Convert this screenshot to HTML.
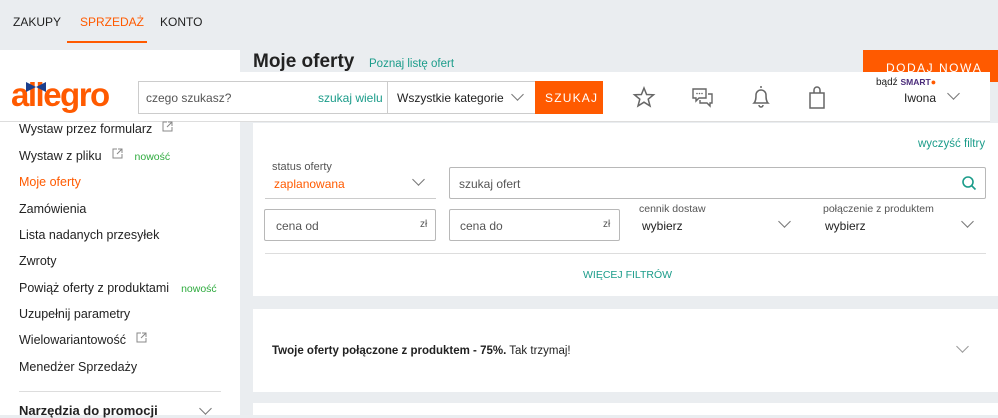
<!DOCTYPE html>
<html><head><meta charset="utf-8"><style>
*{margin:0;padding:0;box-sizing:border-box}
body{width:998px;height:415px;overflow:hidden;background:#eaedf0;font-family:"Liberation Sans",sans-serif;color:#222;position:relative}
.a{position:absolute;white-space:nowrap}
.g{color:#1b9c8a}
.box{position:absolute;border:1px solid #b8b8b8;border-radius:2px;background:#fff}
.chev{position:absolute;width:9px;height:9px;border-right:1.5px solid #777;border-bottom:1.5px solid #777;transform:rotate(45deg)}
.lm{position:absolute;left:19px;font-size:12.5px;color:#222;white-space:nowrap}
.ext{display:inline-block;vertical-align:middle;margin-left:10px;position:relative;top:-3px}
.new{font-size:10.5px;color:#2eab3e;margin-left:12px}
</style></head><body>
<div class="a" style="left:13px;top:15px;font-size:12px">ZAKUPY</div>
<div class="a" style="left:80px;top:15px;font-size:12px;color:#ff5a00">SPRZEDAŻ</div>
<div class="a" style="left:160px;top:15px;font-size:12px">KONTO</div>
<div class="a" style="left:67px;top:41px;width:80px;height:2px;background:#ff5a00"></div>
<div class="a" style="left:0;top:50px;width:240px;height:365px;background:#fff"></div>
<div class="a" style="left:253px;top:51px;font-size:19px;font-weight:bold;color:#222">Moje oferty</div>
<div class="a g" style="left:369px;top:58px;font-size:11.5px">Poznaj listę ofert</div>
<div class="a" style="left:863px;top:50px;width:135px;height:32px;background:#ff5a00;color:#fff;font-size:12px;letter-spacing:1.5px;padding:11px 0 0 23px">DODAJ NOWĄ</div>
<div class="a" style="left:0;top:72px;width:990px;height:50px;background:#fff;border-bottom:1px solid #ddd"></div>
<div class="a" style="left:11px;top:76px;font-size:33px;font-weight:bold;color:#ff5a00;letter-spacing:-1.5px">allegro</div>
<div class="a" style="left:26px;top:82px;width:20px;height:10px;background:#1c3f8c;clip-path:polygon(0 0,50% 50%,100% 0,100% 100%,50% 50%,0 100%)"></div>
<div class="box" style="left:138px;top:81px;width:250px;height:33px;border-color:#ccc;border-radius:0"></div>
<div class="a" style="left:146px;top:91px;font-size:12px;color:#555">czego szukasz?</div>
<div class="a g" style="left:318px;top:91px;font-size:12px">szukaj wielu</div>
<div class="box" style="left:387px;top:81px;width:149px;height:33px;border-color:#ccc;border-radius:0"></div>
<div class="a" style="left:397px;top:91px;font-size:12px">Wszystkie kategorie</div>
<div class="chev" style="left:513px;top:90px"></div>
<div class="a" style="left:535px;top:81px;width:68px;height:33px;background:#ff5a00;color:#fff;font-size:12px;letter-spacing:1.2px;padding:10px 0 0 10px">SZUKAJ</div>
<svg class="a" style="left:632px;top:86px" width="24" height="22" viewBox="0 0 24 22"><polygon points="12,2 14.6,8.5 21.5,8.8 16.2,13.2 18,20 12,16.2 6,20 7.8,13.2 2.5,8.8 9.4,8.5" fill="none" stroke="#666" stroke-width="1.5"/></svg>
<svg class="a" style="left:691px;top:86px" width="24" height="22" viewBox="0 0 24 22"><path d="M2 3h13v9H8l-3 3v-3H2z M17 8h4v9h-2v3l-3-3H9v-3" fill="none" stroke="#666" stroke-width="1.4"/><circle cx="6" cy="7.5" r=".8" fill="#666"/><circle cx="8.5" cy="7.5" r=".8" fill="#666"/><circle cx="11" cy="7.5" r=".8" fill="#666"/></svg>
<svg class="a" style="left:750px;top:84px" width="22" height="26" viewBox="0 0 22 26"><path d="M11 2v2 M4 19c2-2 2-5 2-8a5 5 0 0110 0c0 3 0 6 2 8z M9 21a2 2 0 004 0" fill="none" stroke="#666" stroke-width="1.5"/></svg>
<svg class="a" style="left:807px;top:85px" width="20" height="26" viewBox="0 0 20 26"><path d="M3 8h14v15H3z M7 8V5a3 3 0 016 0v3" fill="none" stroke="#666" stroke-width="1.5"/></svg>
<div class="a" style="left:876px;top:77px;font-size:10px">bądź <b style="color:#4a2b7a;font-size:8.5px">SMART</b><span style="color:#ff5a00;font-size:9px">●</span></div>
<div class="a" style="left:904px;top:91px;font-size:12px">Iwona</div>
<div class="chev" style="left:949px;top:89px"></div>
<div class="lm" style="top:122px">Wystaw przez formularz<svg class="ext" width="11" height="11" viewBox="0 0 11 11"><path d="M5 1H1v9h9V6 M6 1h4v4 M10 1L5 6" fill="none" stroke="#888"/></svg></div>
<div class="lm" style="top:149px">Wystaw z pliku<svg class="ext" width="11" height="11" viewBox="0 0 11 11"><path d="M5 1H1v9h9V6 M6 1h4v4 M10 1L5 6" fill="none" stroke="#888"/></svg><span class="new">nowość</span></div>
<div class="lm" style="top:175px;color:#ff5a00">Moje oferty</div>
<div class="lm" style="top:202px">Zamówienia</div>
<div class="lm" style="top:228px">Lista nadanych przesyłek</div>
<div class="lm" style="top:254px">Zwroty</div>
<div class="lm" style="top:281px">Powiąż oferty z produktami<span class="new">nowość</span></div>
<div class="lm" style="top:307px">Uzupełnij parametry</div>
<div class="lm" style="top:333px">Wielowariantowość<svg class="ext" width="11" height="11" viewBox="0 0 11 11"><path d="M5 1H1v9h9V6 M6 1h4v4 M10 1L5 6" fill="none" stroke="#888"/></svg></div>
<div class="lm" style="top:360px">Menedżer Sprzedaży</div>
<div class="a" style="left:19px;top:391px;width:202px;height:1px;background:#ddd"></div>
<div class="lm" style="top:403px;font-weight:bold;font-size:13px">Narzędzia do promocji</div>
<div class="chev" style="left:201px;top:404px"></div>
<div class="a" style="left:253px;top:123px;width:745px;height:173px;background:#fff"></div>
<div class="a g" style="left:918px;top:138px;font-size:11.5px">wyczyść filtry</div>
<div class="a" style="left:272px;top:161px;font-size:11px;color:#555">status oferty</div>
<div class="a" style="left:274px;top:177px;font-size:12px;color:#ff5a00">zaplanowana</div>
<div class="chev" style="left:414px;top:175px"></div>
<div class="a" style="left:265px;top:198px;width:171px;height:1px;background:#ccc"></div>
<div class="box" style="left:449px;top:167px;width:537px;height:32px"></div>
<div class="a" style="left:459px;top:177px;font-size:12px;color:#555">szukaj ofert</div>
<svg class="a" style="left:961px;top:175px" width="16" height="16" viewBox="0 0 16 16"><circle cx="7" cy="7" r="5" fill="none" stroke="#1b9c8a" stroke-width="1.6"/><path d="M10.5 10.5l4 4" stroke="#1b9c8a" stroke-width="1.6"/></svg>
<div class="box" style="left:264px;top:209px;width:172px;height:32px"></div>
<div class="a" style="left:276px;top:219px;font-size:12px;color:#555">cena od</div>
<div class="a" style="left:420px;top:219px;font-size:10px;color:#555">zł</div>
<div class="box" style="left:449px;top:209px;width:171px;height:32px"></div>
<div class="a" style="left:460px;top:219px;font-size:12px;color:#555">cena do</div>
<div class="a" style="left:603px;top:219px;font-size:10px;color:#555">zł</div>
<div class="a" style="left:639px;top:203px;font-size:10.5px;color:#555">cennik dostaw</div>
<div class="a" style="left:642px;top:219px;font-size:12px">wybierz</div>
<div class="chev" style="left:780px;top:217px"></div>
<div class="a" style="left:823px;top:203px;font-size:10.5px;color:#555">połączenie z produktem</div>
<div class="a" style="left:825px;top:219px;font-size:12px">wybierz</div>
<div class="chev" style="left:963px;top:217px"></div>
<div class="a" style="left:265px;top:253px;width:721px;height:1px;background:#ddd"></div>
<div class="a g" style="left:583px;top:269px;font-size:10.5px">WIĘCEJ FILTRÓW</div>
<div class="a" style="left:253px;top:309px;width:745px;height:83px;background:#fff"></div>
<div class="a" style="left:272px;top:345px;font-size:11.5px"><b>Twoje oferty połączone z produktem - 75%.</b> Tak trzymaj!</div>
<div class="chev" style="left:958px;top:342px;border-color:#999"></div>
<div class="a" style="left:253px;top:403px;width:745px;height:12px;background:#fff"></div>
</body></html>
